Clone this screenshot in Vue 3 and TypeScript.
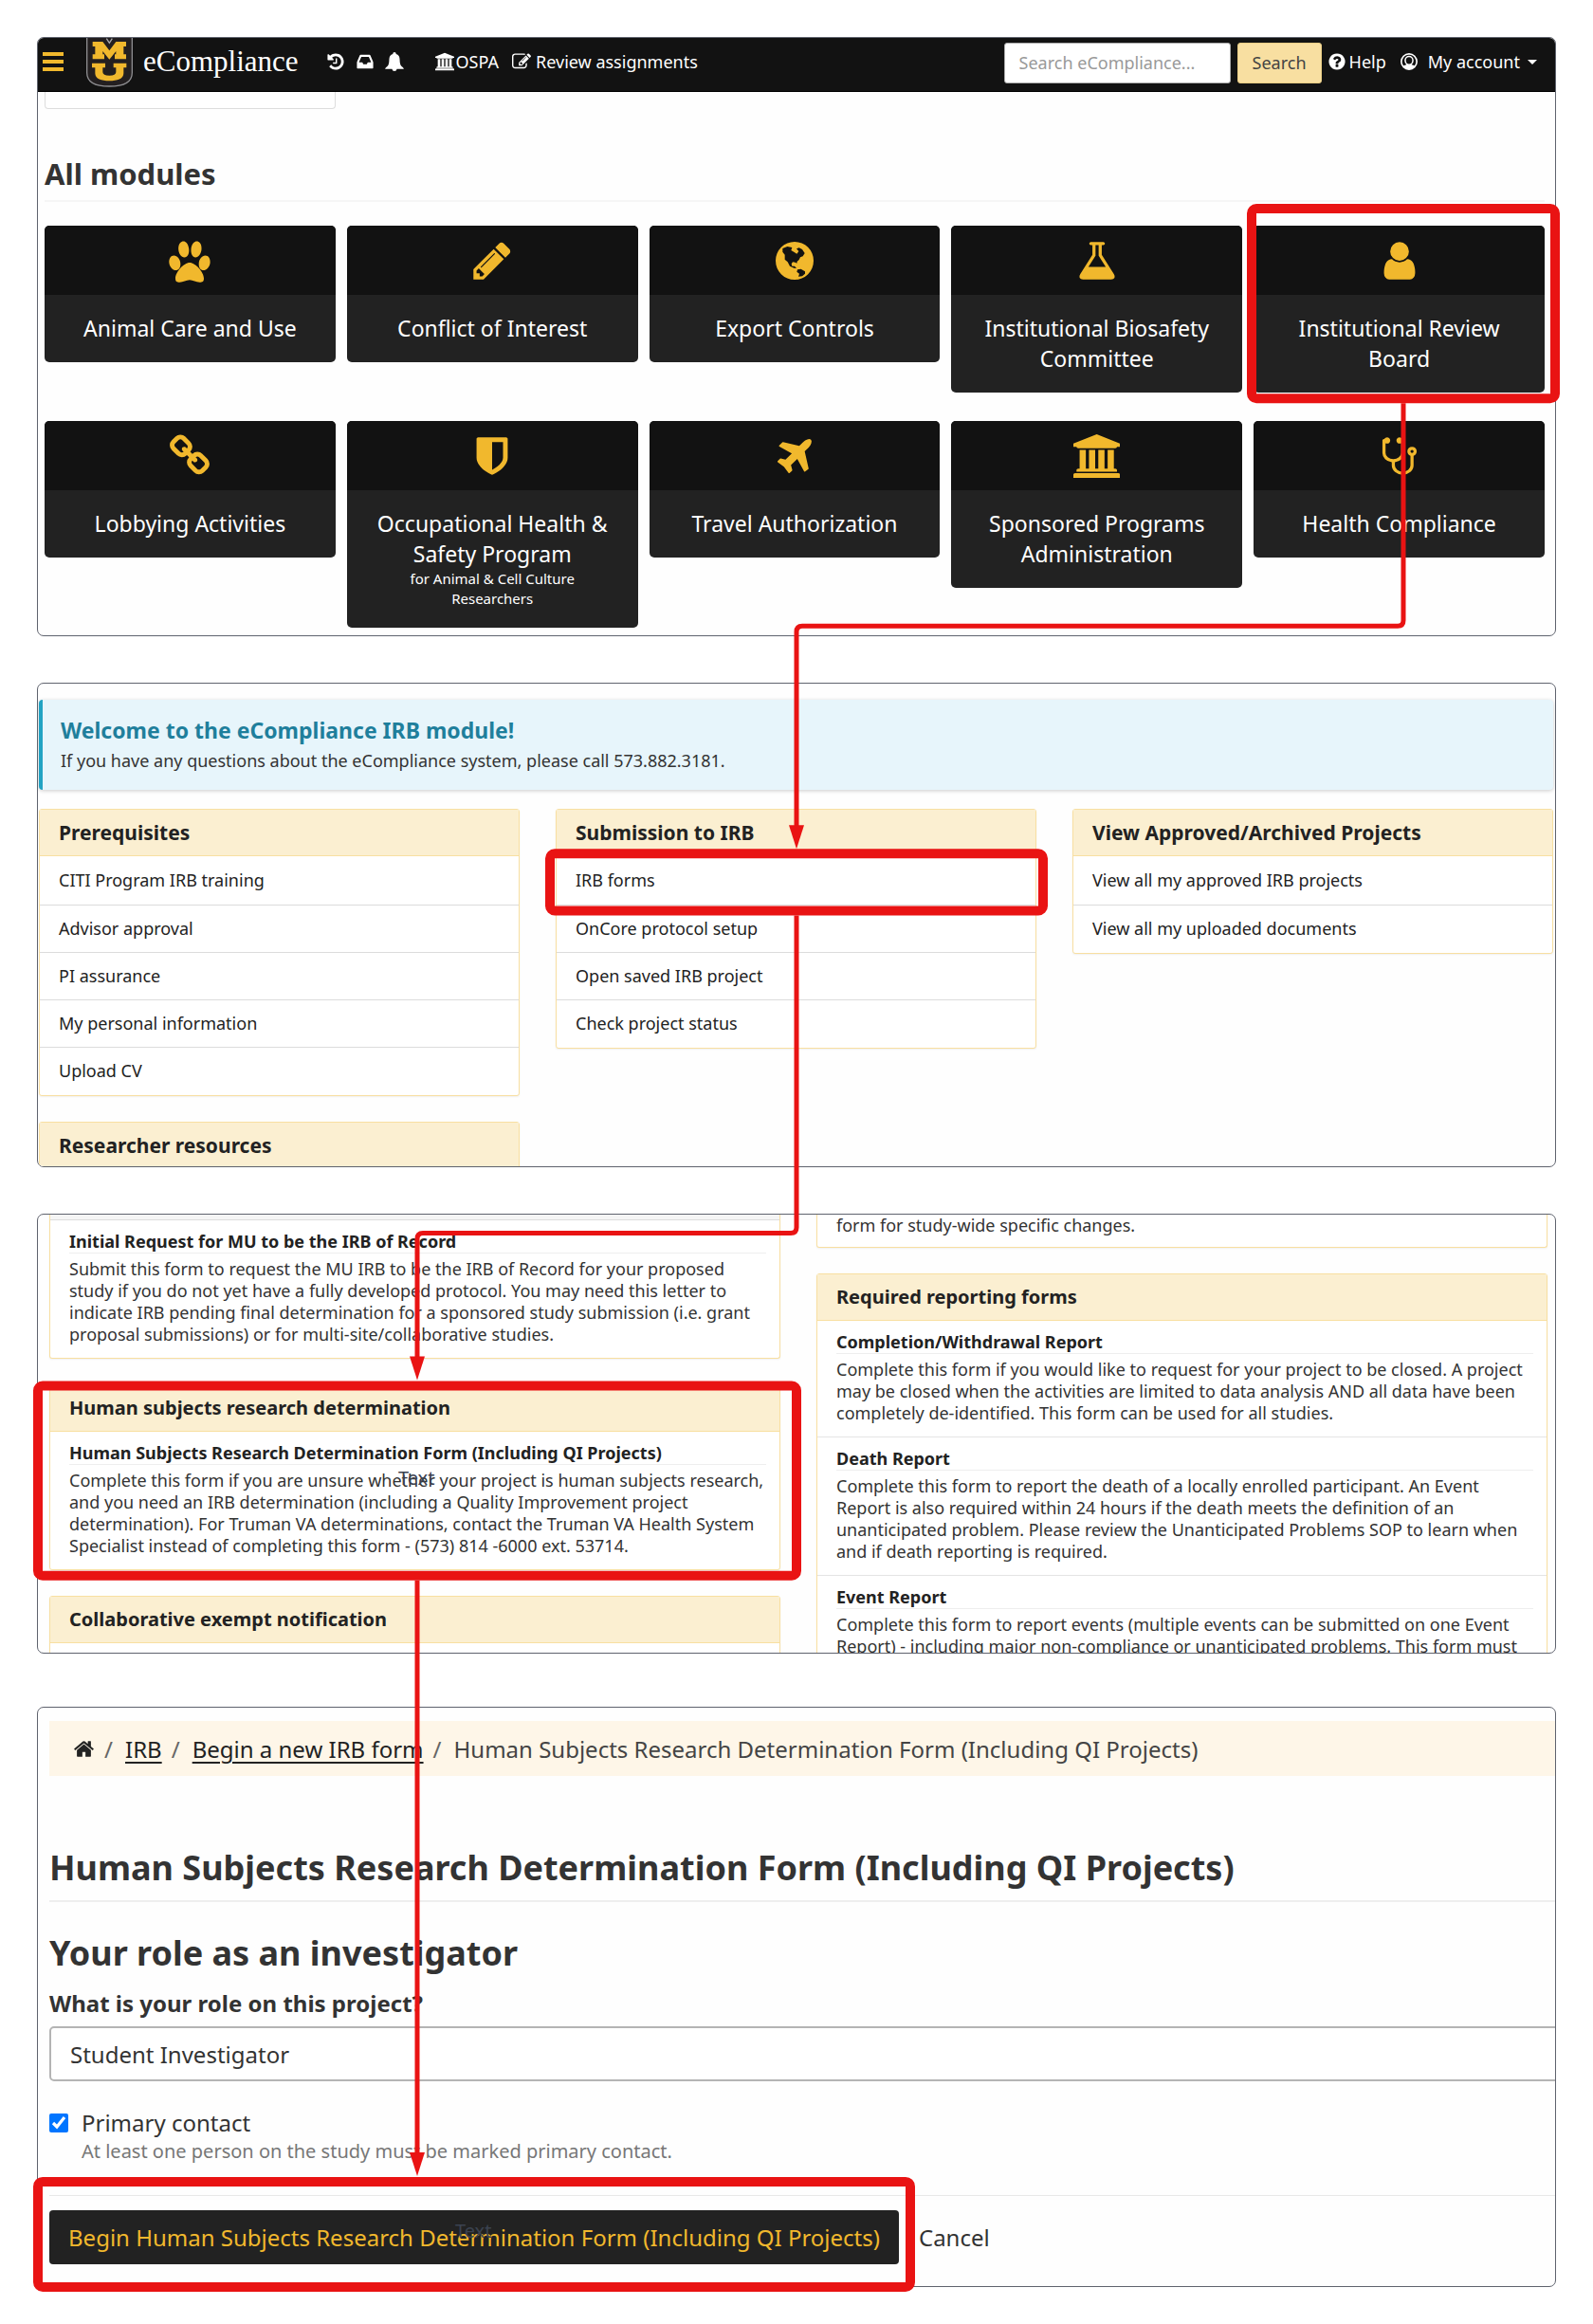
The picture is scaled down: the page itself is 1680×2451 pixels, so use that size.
<script setup lang="ts">
import { ref } from 'vue'

interface Glyph {
  box: string
  path: string
}

interface Module {
  title: string
  note?: string
  icon: string
}

interface LinkCard {
  title: string
  links: string[]
}

interface FormEntry {
  title: string
  text: string
}

const glyphs: Record<string, Glyph> = {
  history: {
    box: '0 0 1792 1792',
    path: 'M1664 896q0 156-61 298t-164 245-245 164-298 61q-172 0-327-72.500t-264-204.500q-7-10-6.500-22.500t8.500-20.500l137-138q10-9 25-9 16 2 23 12 73 95 179 147t225 52q104 0 198.500-40.500t163.500-109.500 109.500-163.500 40.500-198.500-40.500-198.500-109.500-163.500-163.500-109.500-198.500-40.500q-98 0-188 35.500t-160 101.500l137 138q31 30 14 69-17 40-59 40h-448q-26 0-45-19t-19-45v-448q0-42 40-59 39-17 69 14l130 129q107-101 244.500-156.500t284.500-55.500q156 0 298 61t245 164 164 245 61 298zm-640-288v448q0 14-9 23t-23 9h-320q-14 0-23-9t-9-23v-64q0-14 9-23t23-9h224v-352q0-14 9-23t23-9h64q14 0 23 9t9 23z',
  },
  inbox: {
    box: '0 0 1792 1792',
    path: 'M1151 960h316q-1-3-2.500-8t-2.500-8l-212-496h-708l-212 496q-1 2-2.500 8t-2.500 8h316l95 192h320zm513 30v482q0 26-19 45t-45 19h-1408q-26 0-45-19t-19-45v-482q0-62 25-123l238-552q10-25 36.500-42t52.500-17h832q26 0 52.500 17t36.500 42l238 552q25 61 25 123z',
  },
  bell: {
    box: '1 1 18 18',
    path: 'M10 1q1.500 0 1.600 1.700Q15 3.800 15 8q0 5 1.600 6.300Q18.500 15.600 19 17H12.300Q12 19 10 19T7.700 17H1q.5-1.400 2.400-2.700Q5 13 5 8q0-4.200 3.400-5.300Q8.500 1 10 1z',
  },
  bank: {
    box: '0 0 1920 1792',
    path: 'M960 0l960 384v128h-128q0 26-20.500 45t-48.500 19h-1526q-28 0-48.500-19t-20.500-45h-128v-128zm-704 640h256v768h128v-768h256v768h128v-768h256v768h128v-768h256v768h59q28 0 48.500 19t20.500 45v64h-1664v-64q0-26 20.500-45t48.500-19h59v-768zm1595 960q28 0 48.500 19t20.500 45v128h-1920v-128q0-26 20.500-45t48.500-19h1782z',
  },
  edit: {
    box: '0 0 1792 1792',
    path: 'M888 1184l116-116-152-152-116 116v56h96v96h56zm440-720q-16-16-33 1l-350 350q-17 17-1 33t33-1l350-350q17-17 1-33zm80 594v190q0 119-84.500 203.500t-203.500 84.500h-832q-119 0-203.500-84.500t-84.500-203.500v-832q0-119 84.500-203.500t203.500-84.500h832q63 0 117 25 15 7 18 23 3 17-9 29l-49 49q-14 14-32 8-23-6-45-6h-832q-66 0-113 47t-47 113v832q0 66 47 113t113 47h832q66 0 113-47t47-113v-126q0-13 9-22l64-64q15-15 35-7t20 29zm-96-738l288 288-672 672h-288v-288zm444 132l-92 92-288-288 92-92q28-28 68-28t68 28l152 152q28 28 28 68t-28 68z',
  },
  help: {
    box: '0 0 1792 1792',
    path: 'M1024 1376v-192q0-14-9-23t-23-9h-192q-14 0-23 9t-9 23v192q0 14 9 23t23 9h192q14 0 23-9t9-23zm256-672q0-88-55.500-163t-138.500-116-170-41q-243 0-371 213-15 24 8 42l132 100q7 6 19 6 16 0 25-12 53-68 86-92 34-24 86-24 48 0 85.500 26t37.500 59q0 38-20 61t-68 45q-63 28-115.500 86.500t-52.500 125.500v36q0 14 9 23t23 9h192q14 0 23-9t9-23q0-19 21.500-49.500t54.500-49.500q32-18 49-28.500t46-35 44.500-48 28-60.500 12.500-81zm384 192q0 209-103 385.500t-279.500 279.500-385.500 103-385.500-103-279.500-279.500-103-385.500 103-385.500 279.500-279.500 385.500-103 385.500 103 279.500 279.500 103 385.500z',
  },
  account: {
    box: '0 0 20 20',
    path: 'M10 1a9 9 0 1 0 0 18a9 9 0 0 0 0-18zM10 2.800a7.200 7.200 0 0 1 5.800 11.500Q14.500 13.600 12.700 13.300A5.600 5.600 0 0 0 14.800 8.800A4.800 5 0 0 0 5.200 8.800A5.600 5.600 0 0 0 7.300 13.300Q5.500 13.600 4.200 14.300A7.200 7.200 0 0 1 10 2.800zM10 5.300a3.300 3.600 0 0 1 3.300 3.700Q13 12.600 10 12.600T6.700 9A3.300 3.600 0 0 1 10 5.300z',
  },
  paw: {
    box: '0 0 46 46',
    path: 'M16.500 2.500c3.200 0 5.400 3.800 5.800 8.500s-1.500 8.500-4.800 8.500-6-3.800-6.300-8.500 1.700-8.500 5.300-8.500zM30.500 2.500c3.500 0 5.400 3.800 5 8.500s-3.200 8.500-6.300 8.500-5-3.800-4.700-8.500 2.700-8.500 6-8.500zM6.500 17.500c3.500 0 6.500 3.800 6.800 8.200s-1.700 7.300-4.900 7.300-6.600-3.600-7-7.800 1.600-7.700 5.100-7.700zM39.500 17.500c3.500 0 5.500 3.500 5.100 7.700s-3.800 7.800-7 7.800-5.200-2.900-4.900-7.300 3.300-8.200 6.800-8.200zM23 25c6 0 15 10 15 16.500 0 3.500-1.600 4.300-4.400 4.300-4 0-7-2.500-10.600-2.500S16 45.800 12.500 45.800C9.600 45.800 8 45 8 41.500 8 35 17 25 23 25z',
  },
  pencil: {
    box: '0 0 1792 1792',
    path: 'M491 1536l91-91-235-235-91 91v107h128v128h107zm523-928q0-22-22-22-10 0-17 7l-542 542q-7 7-7 17 0 22 22 22 10 0 17-7l542-542q7-7 7-17zm-54-192l416 416-832 832h-416v-416zm683 96q0 53-37 90l-166 166-416-416 166-165q36-38 90-38 53 0 91 38l235 234q37 39 37 91z',
  },
  globe: {
    box: '-9 -9 138 138',
    path: 'M60 0a60 60 0 1 0 0 120a60 60 0 0 0 0-120zM22 21L37 15 52 18 49 27 59 33 67 38 73 30 66 22 74 19 84 24 92 36 86 46 78 49 74 57 68 62 67 68 62 65 54 64 50 70 52 77 60 77 66 84 58 83 45 77 38 64 29 56 29 41 22 32zM69 88L80 86 93 94 93 101 84 109 72 110 75 101 67 95z',
  },
  flask: {
    box: '0 0 1792 1792',
    path: 'M1591 1448q56 89 21.500 152.500t-140.500 63.500h-1152q-106 0-140.500-63.500t21.500-152.500l503-793v-399h-64q-26 0-45-19t-19-45 19-45 45-19h512q26 0 45 19t19 45-19 45-45 19h-64v399zm-779-725l-272 429h712l-272-429-20-31v-436h-128v436z',
  },
  user: {
    box: '0 0 1792 1792',
    path: 'M1536 1399q0 109-62.500 187t-150.500 78h-854q-88 0-150.500-78t-62.500-187q0-85 8.500-160.500t31.500-152 58.500-131 94-89 134.500-34.500q131 128 313 128t313-128q76 0 134.500 34.500t94 89 58.500 131 31.500 152 8.500 160.500zm-256-887q0 159-112.500 271.500t-271.500 112.500-271.500-112.500-112.500-271.500 112.500-271.500 271.500-112.500 271.500 112.500 112.500 271.500z',
  },
  chain: {
    box: '0 0 1792 1792',
    path: 'M1520 1216q0-40-28-68l-208-208q-28-28-68-28-42 0-72 32 3 3 19 18.500t21.500 21.500 15 19 13 25.500 3.500 27.500q0 40-28 68t-68 28q-15 0-27.500-3.500t-25.500-13-19-15-21.500-21.500-18.500-19q-33 31-33 73 0 40 28 68l206 207q27 27 68 27 40 0 68-26l147-146q28-28 28-67zm-703-705q0-40-28-68l-206-207q-28-28-68-28-39 0-68 27l-147 146q-28 28-28 67 0 40 28 68l208 208q27 27 68 27 42 0 72-31-3-3-19-18.500t-21.500-21.500-15-19-13-25.500-3.500-27.500q0-40 28-68t68-28q15 0 27.500 3.500t25.500 13 19 15 21.500 21.500 18.500 19q33-31 33-73zm895 705q0 120-85 203l-147 146q-83 83-203 83-121 0-204-85l-206-207q-83-83-83-203 0-123 88-209l-88-88q-86 88-208 88-120 0-204-84l-208-208q-84-84-84-204t85-203l147-146q83-83 203-83 121 0 204 85l206 207q83 83 83 203 0 123-88 209l88 88q86-88 208-88 120 0 204 84l208 208q84 84 84 204z',
  },
  shield: {
    box: '0 0 1792 1792',
    path: 'M1344 960v-640h-448v1137q119-63 213-137 235-184 235-360zm192-768v768q0 86-33.500 170.500t-83 150-118 127.500-126.500 103-121 77.500-89.500 49.500-42.500 20q-12 6-26 6t-26-6q-16-7-42.500-20t-89.500-49.500-121-77.500-126.500-103-118-127.500-83-150-33.500-170.500v-768q0-26 19-45t45-19h1152q26 0 45 19t19 45z',
  },
  plane: {
    box: '0 0 1792 1792',
    path: 'M1568 224q44 52 12 148t-108 172l-161 161 160 696q5 19-12 33l-128 96q-7 6-19 6-4 0-7-1-15-3-21-16l-279-508-259 259 53 194q5 17-8 31l-96 96q-9 9-23 9h-2q-15-2-24-13l-189-252-252-189q-11-7-13-23-1-13 9-25l96-97q9-9 23-9 6 0 8 1l194 53 259-259-508-279q-14-8-17-24-2-16 9-27l128-128q14-13 30-8l665 159 160-160q76-76 172-108t148 12z',
  },
  stethoscope: {
    box: '0 0 1792 1792',
    path: 'M1472 704q0-26-19-45t-45-19-45 19-19 45 19 45 45 19 45-19 19-45zm128 0q0 62-35.500 111t-92.500 70v395q0 159-131.500 271.500t-316.500 112.500-316.500-112.500-131.500-271.500v-132q-164-20-274-128t-110-252v-512q0-26 19-45t45-19q6 0 16 2 17-30 47-48t65-18q53 0 90.500 37.500t37.500 90.500-37.500 90.500-90.500 37.500q-33 0-64-18v402q0 106 94 181t226 75 226-75 94-181v-402q-31 18-64 18-53 0-90.500-37.500t-37.500-90.500 37.500-90.500 90.500-37.500q35 0 65 18t47 48q10-2 16-2 26 0 45 19t19 45v512q0 144-110 252t-274 128v132q0 106 94 181t226 75 226-75 94-181v-395q-57-21-92.500-70t-35.500-111q0-80 56-136t136-56 136 56 56 136z',
  },
  home: {
    box: '0 0 1792 1792',
    path: 'M1472 992v480q0 26-19 45t-45 19h-384v-384h-256v384h-384q-26 0-45-19t-19-45v-480q0-1 .5-3t.5-3l575-474 575 474q1 2 1 6zm223-69l-62 74q-8 9-21 11h-3q-13 0-21-7l-692-577-692 577q-12 8-24 7-13-2-21-11l-62-74q-8-10-7-23.500t11-21.500l719-599q32-26 76-26t76 26l244 204v-195q0-14 9-23t23-9h192q14 0 23 9t9 23v408l219 182q10 8 11 21.500t-7 23.500z',
  },
}

const modules: Module[] = [
  { title: 'Animal Care and Use', icon: 'paw' },
  { title: 'Conflict of Interest', icon: 'pencil' },
  { title: 'Export Controls', icon: 'globe' },
  { title: 'Institutional Biosafety Committee', icon: 'flask' },
  { title: 'Institutional Review Board', icon: 'user' },
  { title: 'Lobbying Activities', icon: 'chain' },
  { title: 'Occupational Health & Safety Program', note: 'for Animal & Cell Culture Researchers', icon: 'shield' },
  { title: 'Travel Authorization', icon: 'plane' },
  { title: 'Sponsored Programs Administration', icon: 'bank' },
  { title: 'Health Compliance', icon: 'stethoscope' },
]

const linkColumns: LinkCard[][] = [
  [
    {
      title: 'Prerequisites',
      links: ['CITI Program IRB training', 'Advisor approval', 'PI assurance', 'My personal information', 'Upload CV'],
    },
    { title: 'Researcher resources', links: [] },
  ],
  [
    {
      title: 'Submission to IRB',
      links: ['IRB forms', 'OnCore protocol setup', 'Open saved IRB project', 'Check project status'],
    },
  ],
  [
    {
      title: 'View Approved/Archived Projects',
      links: ['View all my approved IRB projects', 'View all my uploaded documents'],
    },
  ],
]

const initialRequest: FormEntry = {
  title: 'Initial Request for MU to be the IRB of Record',
  text: 'Submit this form to request the MU IRB to be the IRB of Record for your proposed study if you do not yet have a fully developed protocol. You may need this letter to indicate IRB pending final determination for a sponsored study submission (i.e. grant proposal submissions) or for multi-site/collaborative studies.',
}

const determination: FormEntry = {
  title: 'Human Subjects Research Determination Form (Including QI Projects)',
  text: 'Complete this form if you are unsure whether your project is human subjects research, and you need an IRB determination (including a Quality Improvement project determination). For Truman VA determinations, contact the Truman VA Health System Specialist instead of completing this form - (573) 814 -6000 ext. 53714.',
}

const reports: FormEntry[] = [
  {
    title: 'Completion/Withdrawal Report',
    text: 'Complete this form if you would like to request for your project to be closed. A project may be closed when the activities are limited to data analysis AND all data have been completely de-identified. This form can be used for all studies.',
  },
  {
    title: 'Death Report',
    text: 'Complete this form to report the death of a locally enrolled participant. An Event Report is also required within 24 hours if the death meets the definition of an unanticipated problem. Please review the Unanticipated Problems SOP to learn when and if death reporting is required.',
  },
  {
    title: 'Event Report',
    text: 'Complete this form to report events (multiple events can be submitted on one Event Report) - including major non-compliance or unanticipated problems. This form must',
  },
]

const query = ref('')
const role = ref('Student Investigator')
const primaryContact = ref(true)
</script>

<template>
  <main class="sheet">
    <section class="panel">
      <header class="topbar">
        <button class="burger" type="button" aria-label="Menu"><i></i><i></i><i></i></button>
        <svg class="logo" viewBox="0 0 147 156" aria-hidden="true">
          <path d="M2 0V110Q2 153 73 153Q145 153 145 110V0" fill="#231f20" stroke="#8d8d90" stroke-width="4" />
          <path d="M64 2l9 14 9-14" fill="none" stroke="#a9a9ab" stroke-width="4" />
          <path d="M20 12H52L73 40 94 12H126V27H118V52H126V67H90V52H94V42L73 68 52 42V52H57V67H20V52H28V27H20z" fill="#f1b82d" />
          <path d="M18 80H60V94H52V108Q52 119 73 119Q94 119 94 108V94H86V80H127V94H118V112C118 130 98 136 73 136S28 130 28 112V94H18z" fill="#f1b82d" />
        </svg>
        <a class="brand" href="#">eCompliance</a>
        <nav class="quick">
          <a v-for="name in ['history', 'inbox', 'bell']" :key="name" href="#" :aria-label="name">
            <svg :viewBox="glyphs[name].box"><path :d="glyphs[name].path" /></svg>
          </a>
        </nav>
        <nav class="tools">
          <a href="#"><svg :viewBox="glyphs.bank.box"><path :d="glyphs.bank.path" /></svg>OSPA</a>
          <a class="spaced" href="#"><svg :viewBox="glyphs.edit.box"><path :d="glyphs.edit.path" /></svg>Review assignments</a>
        </nav>
        <form class="search" @submit.prevent>
          <input v-model="query" type="text" placeholder="Search eCompliance..." aria-label="Search eCompliance" />
          <button type="submit">Search</button>
        </form>
        <a class="help" href="#"><svg :viewBox="glyphs.help.box"><path :d="glyphs.help.path" /></svg>Help</a>
        <a class="account" href="#">
          <svg :viewBox="glyphs.account.box"><path :d="glyphs.account.path" fill-rule="evenodd" /></svg>My account<i class="caret"></i>
        </a>
      </header>
      <div class="modules">
        <div class="stub"></div>
        <h2>All modules</h2>
        <div class="tiles">
          <a v-for="item in modules" :key="item.title" class="tile" href="#">
            <span class="tile-icon">
              <svg :viewBox="glyphs[item.icon].box"><path :d="glyphs[item.icon].path" fill-rule="evenodd" /></svg>
            </span>
            <span class="tile-text">{{ item.title }}<small v-if="item.note">{{ item.note }}</small></span>
          </a>
        </div>
      </div>
    </section>

    <section class="panel irb">
      <div class="welcome">
        <h3>Welcome to the eCompliance IRB module!</h3>
        <p>If you have any questions about the eCompliance system, please call 573.882.3181.</p>
      </div>
      <div class="link-columns">
        <div v-for="(column, index) in linkColumns" :key="index">
          <article v-for="card in column" :key="card.title" class="card">
            <h4>{{ card.title }}</h4>
            <ul>
              <li v-for="link in card.links" :key="link"><a href="#">{{ link }}</a></li>
            </ul>
          </article>
        </div>
      </div>
    </section>

    <section class="panel forms">
      <div>
        <article class="card continued">
          <div class="strip"></div>
          <div class="entry">
            <h5>{{ initialRequest.title }}</h5>
            <p>{{ initialRequest.text }}</p>
          </div>
        </article>
        <article class="card">
          <h4>Human subjects research determination</h4>
          <div class="entry">
            <h5>{{ determination.title }}</h5>
            <p>{{ determination.text }}</p>
          </div>
        </article>
        <article class="card">
          <h4>Collaborative exempt notification</h4>
          <div class="entry"></div>
        </article>
      </div>
      <div>
        <article class="card continued">
          <p class="tail">form for study-wide specific changes.</p>
        </article>
        <article class="card">
          <h4>Required reporting forms</h4>
          <div v-for="report in reports" :key="report.title" class="entry">
            <h5>{{ report.title }}</h5>
            <p>{{ report.text }}</p>
          </div>
        </article>
      </div>
    </section>

    <section class="panel start">
      <nav class="crumbs">
        <a href="#" aria-label="Home"><svg :viewBox="glyphs.home.box"><path :d="glyphs.home.path" /></svg></a>
        <i>/</i><a href="#">IRB</a><i>/</i><a href="#">Begin a new IRB form</a><i>/</i>
        <span>Human Subjects Research Determination Form (Including QI Projects)</span>
      </nav>
      <h1>Human Subjects Research Determination Form (Including QI Projects)</h1>
      <form @submit.prevent>
        <h2>Your role as an investigator</h2>
        <label class="question" for="role">What is your role on this project?</label>
        <select id="role" v-model="role">
          <option>Student Investigator</option>
        </select>
        <div class="primary">
          <input id="primary" v-model="primaryContact" type="checkbox" />
          <label for="primary">Primary contact</label>
        </div>
        <p class="hint">At least one person on the study must be marked primary contact.</p>
        <div class="actions">
          <button type="submit">Begin Human Subjects Research Determination Form (Including QI Projects)</button>
          <a href="#">Cancel</a>
        </div>
      </form>
    </section>

    <!-- Walkthrough markings laid over the four screens -->
    <svg class="marks" viewBox="0 0 1680 2451" preserveAspectRatio="none" aria-hidden="true">
      <g class="frame">
        <rect x="1320" y="220" width="320" height="200" rx="5" />
        <rect x="580" y="900" width="520" height="60" rx="5" />
        <rect x="40" y="1461" width="800" height="200" rx="5" />
        <rect x="40" y="2300" width="920" height="111" rx="5" />
      </g>
      <g class="wire">
        <path d="M1480 425V654Q1480 660 1474 660H846Q840 660 840 666V874" />
        <path d="M840 965V1294Q840 1300 834 1300H446Q440 1300 440 1306V1434" />
        <path d="M440 1666V2274" />
      </g>
      <g class="tip">
        <path d="M832 870H848L840 895z" />
        <path d="M432 1430H448L440 1455z" />
        <path d="M432 2269H448L440 2294z" />
      </g>
    </svg>
    <span class="mark-text first">Text</span>
    <span class="mark-text second">Text</span>
  </main>
</template>

<style>
body {
  margin: 0;
  background: #fff;
}
</style>

<style scoped>
.sheet,
.sheet * {
  box-sizing: border-box;
}

.sheet {
  position: relative;
  display: flex;
  flex-direction: column;
  padding: 39px 39px 40px;
  font-family: "Noto Sans", "Open Sans", sans-serif;
  font-size: 18px;
  color: #333;
}

h1, h2, h3, h4, h5, p, ul {
  margin: 0;
  padding: 0;
}

a {
  color: inherit;
  text-decoration: none;
}

i {
  font-style: normal;
}

svg {
  display: block;
  fill: currentColor;
}

input, select, button {
  font: inherit;
}

.panel {
  overflow: hidden;
  border: 1px solid #5f636e;
  border-radius: 7px;
  background: #fefefe;
}

/* Top bar */
.topbar {
  display: flex;
  align-items: center;
  height: 57px;
  padding: 0 19px 6px 5px;
  border-bottom: 1px solid #000;
  background: #121212;
  color: #fff;
}

.topbar a svg {
  width: 20px;
  height: 20px;
}

.burger {
  display: flex;
  flex-direction: column;
  gap: 4px;
  width: 22px;
  padding: 0;
  border: 0;
  background: none;
}

.burger i {
  height: 4px;
  background: #f1b82d;
}

.logo {
  align-self: flex-start;
  width: 49px;
  height: 52px;
  margin: 0 11px 0 24px;
  flex: none;
}

.brand {
  font-family: "Liberation Serif", serif;
  font-size: 31px;
  line-height: 40px;
}

.quick {
  display: flex;
  gap: 11px;
  margin-left: 29px;
}

.tools {
  display: flex;
  gap: 14px;
  margin-left: 33px;
}

.tools a,
.help,
.account {
  display: flex;
  align-items: center;
  gap: 2px;
  line-height: 24px;
}

.tools .spaced {
  gap: 5px;
}

.search {
  display: flex;
  gap: 7px;
  margin-top: 2px;
  margin-left: auto;
}

.search input {
  width: 239px;
  height: 43px;
  padding: 0 15px;
  border: 1px solid #aaa;
  border-radius: 3px;
  background: #fff;
}

.search input::placeholder {
  color: #999;
  opacity: 1;
}

.search button {
  width: 89px;
  height: 43px;
  padding: 0;
  border: 1px solid #e8cd85;
  border-radius: 3px;
  background: #f8dfa1;
  color: #444;
}

.help {
  margin-left: 6px;
  gap: 3px;
}

.account {
  margin-left: 14px;
  gap: 10px;
}

.caret {
  margin-left: -2px;
  border: 5px solid transparent;
  border-top-color: #fff;
  border-bottom: 0;
}

/* Module tiles */
.modules {
  padding: 0 11px 8px 7px;
}

.stub {
  width: 307px;
  height: 18px;
  border: 1px solid #ddd;
  border-top: 0;
  border-radius: 0 0 4px 4px;
  background: #fff;
}

.modules h2 {
  margin: 47px 0 25px;
  padding-bottom: 7px;
  border-bottom: 2px solid #f6f6f6;
  font-size: 31px;
  line-height: 42px;
}

.tiles {
  display: grid;
  grid-template-columns: repeat(5, 1fr);
  align-items: start;
  gap: 30px 12px;
}

.tile {
  overflow: hidden;
  border-radius: 5px;
  background: #222;
  color: #fff;
  text-align: center;
}

.tile-icon {
  display: flex;
  align-items: center;
  justify-content: center;
  height: 73px;
  background: #121212;
  color: #f1b82d;
}

.tile-icon svg {
  height: 46px;
}

.tile-text {
  display: block;
  padding: 19px 24px 20px;
  font-size: 23px;
  line-height: 32px;
}

.tile-text small {
  display: block;
  padding: 0 24px;
  font-size: 15px;
  line-height: 21px;
}

/* Link and form cards */
.card {
  border: 1px solid #f8dfa1;
  border-radius: 3px;
  background: #fff;
  box-shadow: 0 1px 2px rgba(0, 0, 0, 0.06);
}

.card + .card {
  margin-top: 27px;
}

.card h4 {
  height: 49px;
  padding-left: 20px;
  border-bottom: 1px solid #f8dfa1;
  background: #fbefd1;
  color: #222;
  font-size: 21px;
  line-height: 48px;
}

.irb {
  height: 511px;
  margin-top: 49px;
  padding: 17px 2px 0 1px;
}

.welcome {
  height: 95px;
  padding: 16px 19px 0;
  border-left: 4px solid #22a3c3;
  border-radius: 4px;
  background: #e7f5fb;
  box-shadow: 0 1px 4px rgba(0, 0, 0, 0.2);
}

.welcome h3 {
  color: #1f7f9c;
  font-size: 23px;
  line-height: 32px;
}

.welcome p {
  line-height: 32px;
}

.link-columns {
  display: grid;
  grid-template-columns: repeat(3, 1fr);
  gap: 38px;
  margin-top: 20px;
}

.card ul {
  padding: 1px 0;
  list-style: none;
}

.card li {
  height: 50px;
  padding-left: 20px;
  color: #222;
  line-height: 49px;
}

.card li + li {
  border-top: 1px solid #dcdcdc;
}

.forms {
  display: grid;
  grid-template-columns: 1fr 1fr;
  gap: 38px;
  height: 464px;
  margin-top: 49px;
  padding: 0 8px 0 12px;
}

.forms h4 {
  font-size: 20px;
}

.continued {
  border-top: 0;
  border-radius: 0 0 3px 3px;
}

.strip {
  height: 6px;
  border-bottom: 1px solid #ddd;
  background: #f5f5f5;
}

.entry {
  min-height: 40px;
  padding: 11px 14px 13px 20px;
  line-height: 23px;
}

.entry + .entry {
  border-top: 1px solid #e4e4e4;
}

.entry h5 {
  margin-bottom: 5px;
  border-bottom: 1px solid #eee;
  color: #222;
  font-size: 18px;
}

.tail {
  padding: 0 20px 11px;
  line-height: 23px;
}

/* Form start */
.start {
  margin-top: 56px;
  padding: 14px 0 23px 12px;
  font-size: 24px;
}

.crumbs {
  display: flex;
  align-items: center;
  height: 58px;
  padding-left: 25px;
  background: #fef6e8;
  color: #444;
}

.crumbs a {
  color: #222;
  text-decoration: underline;
  text-decoration-thickness: 2px;
  text-underline-offset: 4px;
}

.crumbs svg {
  width: 23px;
  height: 23px;
}

.crumbs i {
  width: 32px;
  padding-left: 10px;
  color: #666;
}

.start h1 {
  margin-top: 73px;
  padding-bottom: 10px;
  border-bottom: 2px solid #eee;
  font-size: 36px;
  line-height: 48px;
}

.start h2 {
  margin-top: 30px;
  font-size: 36px;
  line-height: 48px;
}

.question {
  display: block;
  margin: 13px 0 8px;
  font-weight: bold;
  line-height: 32px;
}

.start select {
  display: block;
  width: calc(100% + 10px);
  height: 58px;
  padding: 0 20px;
  appearance: none;
  border: 2px solid #b4b4b4;
  border-radius: 5px;
  background: #fff;
  color: #333;
}

.primary {
  display: flex;
  align-items: center;
  gap: 14px;
  margin-top: 28px;
  line-height: 32px;
}

.primary input {
  width: 20px;
  height: 20px;
  margin: 0;
  accent-color: #0075ff;
}

.hint {
  padding-left: 34px;
  color: #777;
  font-size: 20px;
  line-height: 28px;
}

.actions {
  display: flex;
  align-items: center;
  gap: 21px;
  margin-top: 32px;
  padding-top: 15px;
  border-top: 1px solid #e8e8e8;
}

.actions button {
  height: 57px;
  padding: 0 20px;
  border: 0;
  border-radius: 4px;
  background: #222;
  color: #f1b82d;
}

/* Walkthrough markings */
.marks {
  position: absolute;
  inset: 0;
  width: 100%;
  height: 100%;
  pointer-events: none;
}

.frame {
  fill: none;
  stroke: #e91313;
  stroke-width: 10;
}

.wire {
  fill: none;
  stroke: #e91313;
  stroke-width: 5;
}

.tip {
  fill: #e91313;
}

.mark-text {
  position: absolute;
  color: #3b4250;
  font-size: 20px;
  line-height: 28px;
  pointer-events: none;
}

.first {
  top: 1545px;
  left: 25%;
}

.second {
  top: 2339px;
  left: 480px;
}
</style>
